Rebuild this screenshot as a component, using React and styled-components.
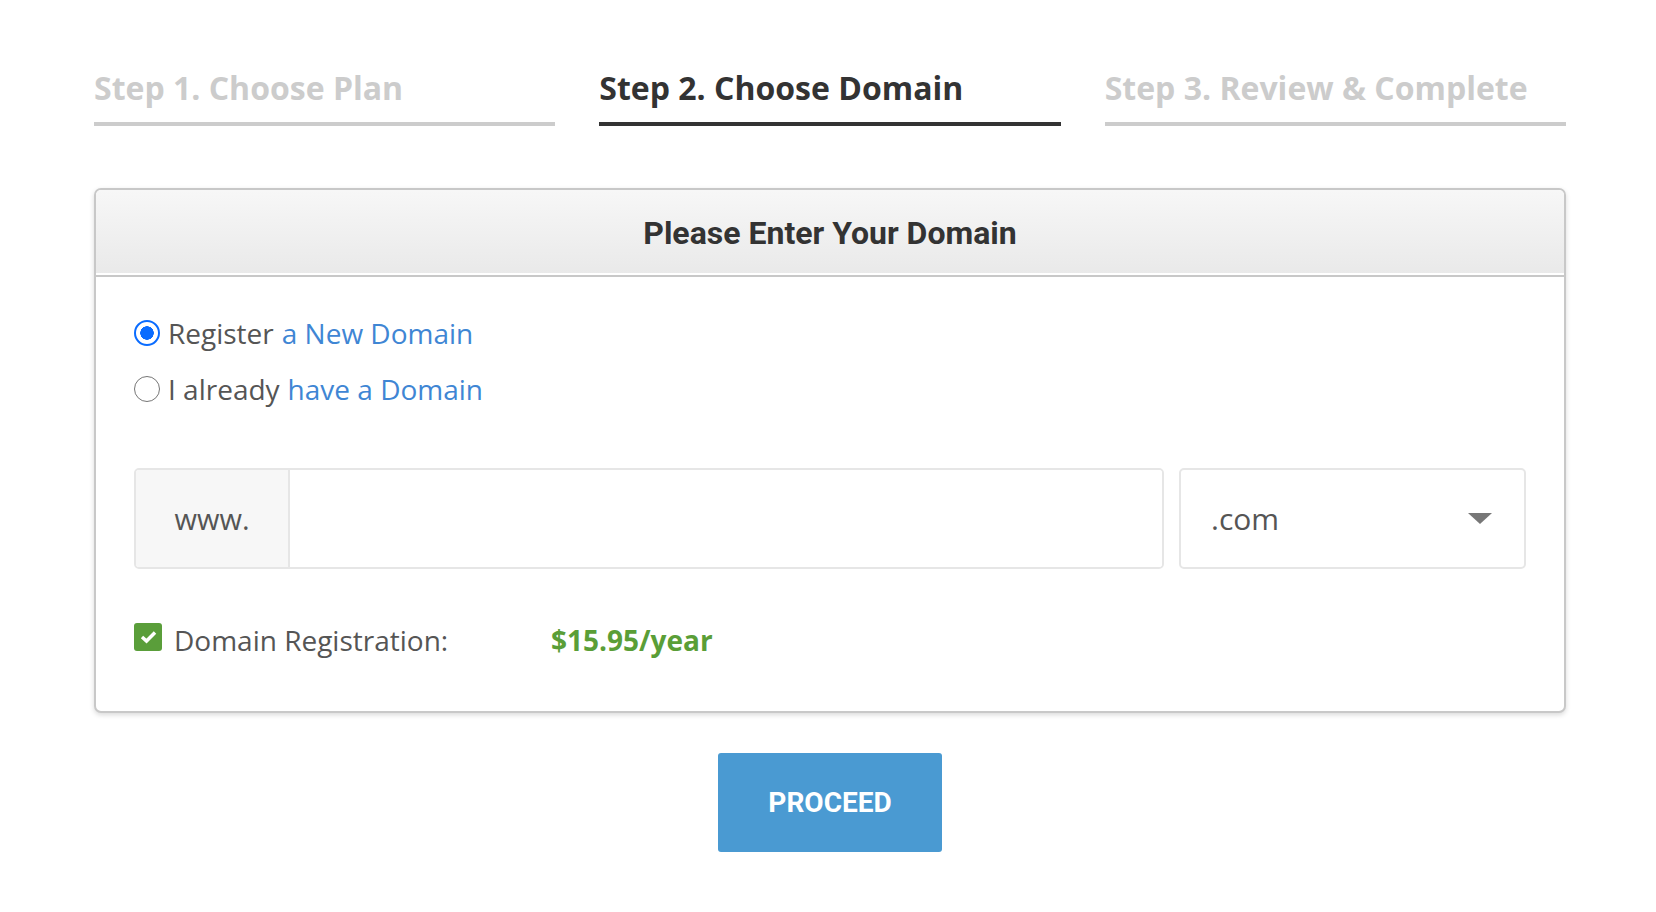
import React, { useState } from "react";
import styled, { createGlobalStyle } from "styled-components";

const GlobalStyle = createGlobalStyle`
  html, body {
    margin: 0;
    padding: 0;
    background: #ffffff;
    font-family: "Open Sans", "Liberation Sans", sans-serif;
  }
`;

const Page = styled.div`
  width: 1472px;
  margin-left: calc(50% - 734px);
  padding-top: 67px;
`;

const Steps = styled.div`
  display: grid;
  grid-template-columns: repeat(3, 1fr);
  column-gap: 44px;
`;

const Step = styled.div`
  font-family: "Open Sans", sans-serif;
  font-weight: 700;
  font-size: 32px;
  line-height: 42px;
  padding-bottom: 13px;
  color: ${({ active }) => (active ? "#333333" : "#cccccc")};
  border-bottom: 4px solid ${({ active }) => (active ? "#333333" : "#cccccc")};
  white-space: nowrap;
`;

const Card = styled.div`
  margin-top: 62px;
  border: 2px solid #c8c8c8;
  border-radius: 7px;
  box-shadow: 0 2px 5px rgba(0, 0, 0, 0.15);
  background: #ffffff;
  overflow: hidden;
`;

const CardHeader = styled.div`
  height: 85px;
  display: flex;
  align-items: center;
  justify-content: center;
  background: linear-gradient(#f7f7f7, #e9e9e9);
  border-bottom: 2px solid #c8c8c8;
  box-shadow: inset 0 -2px 0 #ffffff;
  font-family: Roboto, sans-serif;
  font-weight: 700;
  font-size: 32px;
  color: #333333;
`;

const CardBody = styled.div`
  padding: 36px 38px 51px;
`;

const Options = styled.div`
  display: flex;
  flex-direction: column;
  gap: 16px;
`;

const Option = styled.label`
  display: flex;
  align-items: center;
  height: 40px;
  font-size: 28px;
  color: #555555;
  cursor: pointer;
`;

const Radio = styled.span`
  width: 26px;
  height: 26px;
  box-sizing: border-box;
  border-radius: 50%;
  margin-right: 8px;
  flex-shrink: 0;
  border: ${({ checked }) => (checked ? "2.5px solid #0a6cff" : "1.5px solid #767676")};
  background: ${({ checked }) =>
    checked ? "radial-gradient(circle, #0a6cff 0 6.5px, #ffffff 7px)" : "#ffffff"};
`;

const Link = styled.span`
  color: #3f86d4;
  margin-left: 8px;
`;

const InputRow = styled.div`
  display: flex;
  gap: 15px;
  margin-top: 59px;
  height: 101px;
`;

const InputGroup = styled.div`
  flex: 1;
  display: flex;
  border: 2px solid #e6e6e6;
  border-radius: 5px;
  overflow: hidden;
`;

const Prefix = styled.div`
  width: 152px;
  display: flex;
  align-items: center;
  justify-content: center;
  background: #f7f7f7;
  border-right: 2px solid #e6e6e6;
  font-size: 29px;
  color: #555555;
`;

const TextInput = styled.input`
  flex: 1;
  border: none;
  outline: none;
  padding: 0 20px;
  font-family: "Open Sans", sans-serif;
  font-size: 28px;
  color: #555555;
  background: #ffffff;
`;

const Select = styled.div`
  width: 347px;
  box-sizing: border-box;
  display: flex;
  align-items: center;
  justify-content: space-between;
  padding: 0 32px 0 30px;
  border: 2px solid #e6e6e6;
  border-radius: 5px;
  font-size: 30px;
  color: #555555;
  cursor: pointer;
`;

const Caret = styled.span`
  width: 0;
  height: 0;
  border-left: 12px solid transparent;
  border-right: 12px solid transparent;
  border-top: 11px solid #777777;
`;

const CheckRow = styled.div`
  display: flex;
  align-items: center;
  height: 40px;
  margin-top: 51px;
`;

const CheckBox = styled.span`
  width: 28px;
  height: 28px;
  border-radius: 3px;
  background: #5a9e3a;
  display: flex;
  align-items: center;
  justify-content: center;
  margin-right: 12px;
  margin-top: -6px;
`;

const Label = styled.span`
  width: 377px;
  font-size: 28px;
  color: #555555;
`;

const Price = styled.span`
  font-size: 28px;
  font-weight: 700;
  color: #5a9e37;
`;

const Actions = styled.div`
  display: flex;
  justify-content: center;
  margin-top: 40px;
`;

const Button = styled.button`
  width: 224px;
  height: 99px;
  border: none;
  border-radius: 3px;
  background: #4a9ad2;
  color: #ffffff;
  font-family: Roboto, sans-serif;
  font-weight: 700;
  font-size: 28px;
  cursor: pointer;
`;

export default function App() {
  const [mode, setMode] = useState("new");
  const steps = ["Step 1. Choose Plan", "Step 2. Choose Domain", "Step 3. Review & Complete"];

  return (
    <>
      <GlobalStyle />
      <Page>
        <Steps>
          {steps.map((s, i) => (
            <Step key={s} active={i === 1}>
              {s}
            </Step>
          ))}
        </Steps>

        <Card>
          <CardHeader>Please Enter Your Domain</CardHeader>
          <CardBody>
            <Options>
              <Option onClick={() => setMode("new")}>
                <Radio checked={mode === "new"} />
                Register<Link>a New Domain</Link>
              </Option>
              <Option onClick={() => setMode("existing")}>
                <Radio checked={mode === "existing"} />
                I already<Link>have a Domain</Link>
              </Option>
            </Options>

            <InputRow>
              <InputGroup>
                <Prefix>www.</Prefix>
                <TextInput type="text" />
              </InputGroup>
              <Select>
                .com
                <Caret />
              </Select>
            </InputRow>

            <CheckRow>
              <CheckBox>
                <svg width="17" height="14" viewBox="0 0 17 14">
                  <path d="M2 7 L6.5 11 L15 2.5" fill="none" stroke="#ffffff" strokeWidth="3.5" />
                </svg>
              </CheckBox>
              <Label>Domain Registration:</Label>
              <Price>$15.95/year</Price>
            </CheckRow>
          </CardBody>
        </Card>

        <Actions>
          <Button>PROCEED</Button>
        </Actions>
      </Page>
    </>
  );
}
